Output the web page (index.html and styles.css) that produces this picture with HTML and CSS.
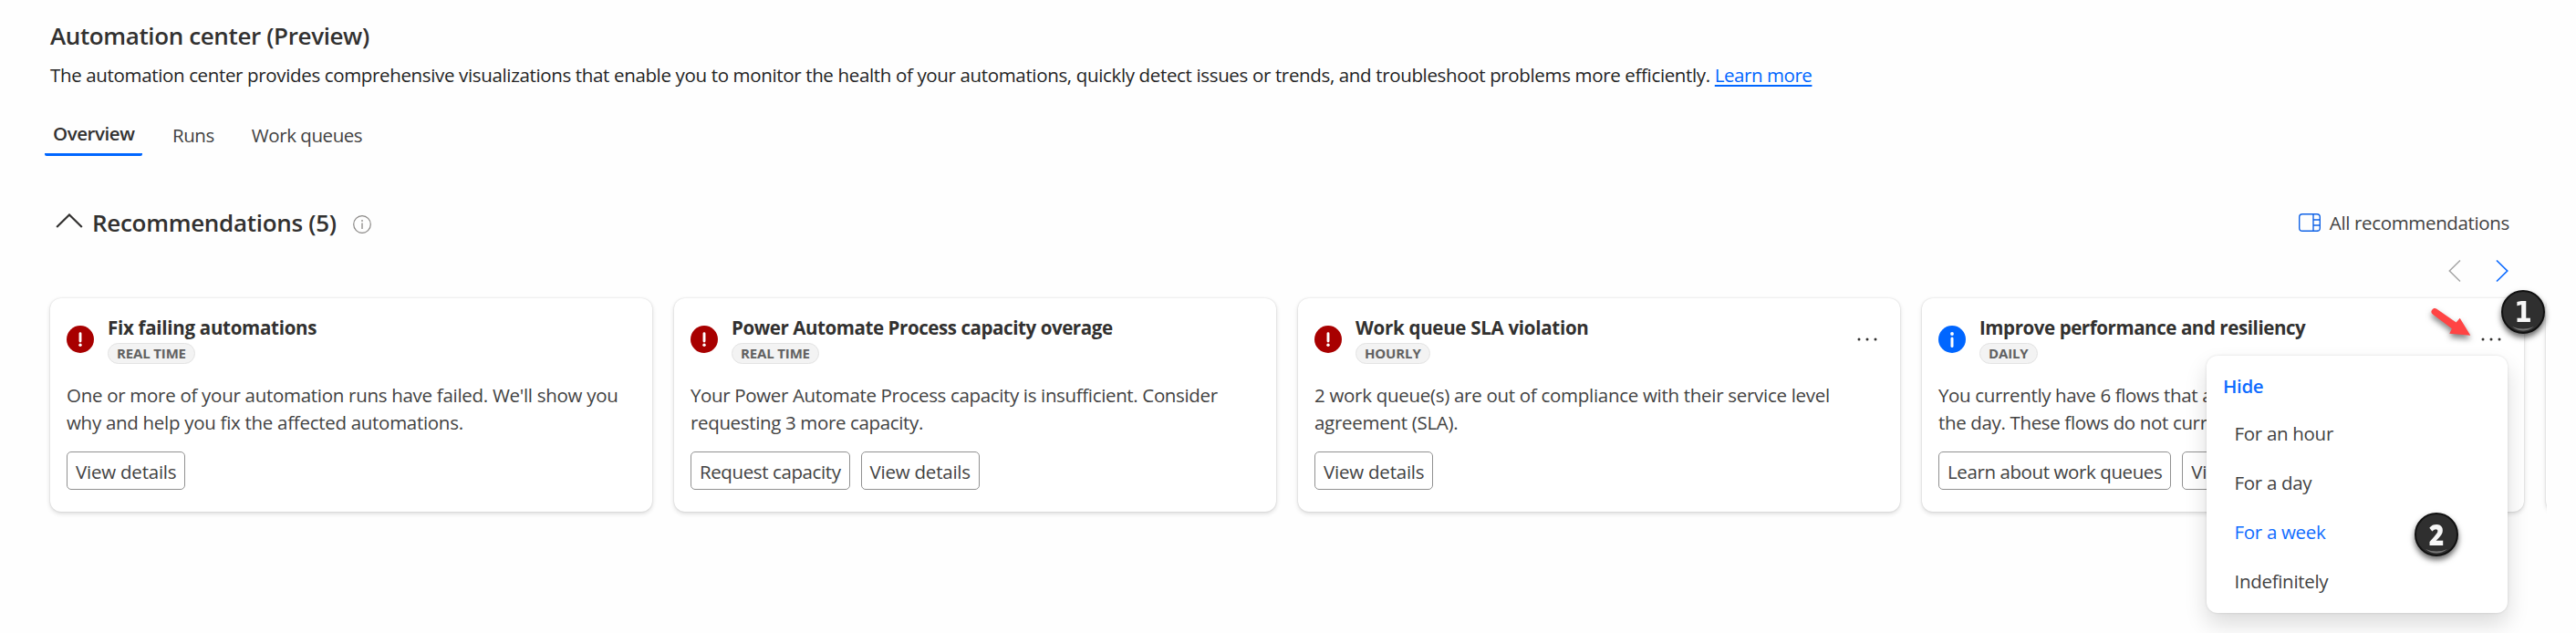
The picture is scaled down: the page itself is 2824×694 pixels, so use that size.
FILE: index.html
```
<!DOCTYPE html>
<html lang="en">
<head>
<meta charset="utf-8">
<title>Automation center</title>
<link rel="stylesheet" href="styles.css">
</head>
<body>
<main class="page">
  <h1 class="page-title">Automation center (Preview)</h1>
  <p class="intro">The automation center provides comprehensive visualizations that enable you to monitor the health of your automations, quickly detect issues or trends, and troubleshoot problems more efficiently. <a class="learn" href="#">Learn more</a></p>

  <nav class="tabs">
    <span class="tab tab-active">Overview</span>
    <span class="tab">Runs</span>
    <span class="tab">Work queues</span>
  </nav>

  <header class="section-head">
    <svg class="collapse" width="30" height="16" viewBox="0 0 30 16"><path d="M1.2 15 15 1.5 28.8 15" fill="none" stroke="#323130" stroke-width="2.2"/></svg>
    <h2 class="section-title">Recommendations (5)</h2>
    <svg class="info" width="20" height="20" viewBox="0 0 20 20"><circle cx="10" cy="10" r="9.3" fill="none" stroke="#8a8886" stroke-width="1.2"/><path d="M10 8.5V15M10 5v2" stroke="#8a8886" stroke-width="1.3"/></svg>
    <span class="all-link">
      <svg width="24" height="20" viewBox="0 0 24 20" fill="none" stroke="#0f62e6" stroke-width="1.4"><rect x=".7" y=".7" width="22.6" height="18.6" rx="3.4"/><path d="M16 1v18M16 7h7M16 13h7"/></svg>
      <span>All recommendations</span>
    </span>
  </header>

  <div class="pager">
    <svg width="14" height="26" viewBox="0 0 14 26"><path d="M13 1.5 1.3 13 13 24.5" fill="none" stroke="#a6a6a6" stroke-width="1.5"/></svg>
    <svg width="14" height="26" viewBox="0 0 14 26"><path d="M1 1.5 12.7 13 1 24.5" fill="none" stroke="#0f6cff" stroke-width="1.7"/></svg>
  </div>

  <section class="carousel">
    <article class="card">
      <div class="card-head">
        <svg class="status" viewBox="0 0 30 30"><circle cx="15" cy="15" r="15" fill="#a80000"/><path d="M15 8.7v8.3" stroke="#fff" stroke-width="2.9" stroke-linecap="round"/><circle cx="15" cy="21.3" r="1.7" fill="#fff"/></svg>
        <div class="card-titles"><h3 class="card-title title-loose">Fix failing automations</h3><span class="pill">REAL TIME</span></div>
      </div>
      <p class="card-text text-loose">One or more of your automation runs have failed. We'll show you<br>why and help you fix the affected automations.</p>
      <div class="actions"><button class="btn btn-details">View details</button></div>
    </article>

    <article class="card">
      <div class="card-head">
        <svg class="status" viewBox="0 0 30 30"><circle cx="15" cy="15" r="15" fill="#a80000"/><path d="M15 8.7v8.3" stroke="#fff" stroke-width="2.9" stroke-linecap="round"/><circle cx="15" cy="21.3" r="1.7" fill="#fff"/></svg>
        <div class="card-titles"><h3 class="card-title">Power Automate Process capacity overage</h3><span class="pill">REAL TIME</span></div>
      </div>
      <p class="card-text">Your Power Automate Process capacity is insufficient. Consider<br>requesting 3 more capacity.</p>
      <div class="actions"><button class="btn">Request capacity</button><button class="btn btn-details">View details</button></div>
    </article>

    <article class="card">
      <div class="card-head">
        <svg class="status" viewBox="0 0 30 30"><circle cx="15" cy="15" r="15" fill="#a80000"/><path d="M15 8.7v8.3" stroke="#fff" stroke-width="2.9" stroke-linecap="round"/><circle cx="15" cy="21.3" r="1.7" fill="#fff"/></svg>
        <div class="card-titles"><h3 class="card-title title-loose">Work queue SLA violation</h3><span class="pill">HOURLY</span></div>
        <svg class="more" viewBox="0 0 22 4" fill="#323130"><circle cx="2" cy="2" r="1.5"/><circle cx="11" cy="2" r="1.5"/><circle cx="20" cy="2" r="1.5"/></svg>
      </div>
      <p class="card-text text-loose">2 work queue(s) are out of compliance with their service level<br>agreement (SLA).</p>
      <div class="actions"><button class="btn btn-details">View details</button></div>
    </article>

    <article class="card">
      <div class="card-head">
        <svg class="status" viewBox="0 0 30 30"><circle cx="15" cy="15" r="15" fill="#0066ff"/><circle cx="15" cy="9" r="1.9" fill="#fff"/><path d="M15 14v8.5" stroke="#fff" stroke-width="3" stroke-linecap="round"/></svg>
        <div class="card-titles"><h3 class="card-title">Improve performance and resiliency</h3><span class="pill">DAILY</span></div>
        <svg class="more" viewBox="0 0 22 4" fill="#323130"><circle cx="2" cy="2" r="1.5"/><circle cx="11" cy="2" r="1.5"/><circle cx="20" cy="2" r="1.5"/></svg>
      </div>
      <p class="card-text">You currently have 6 flows that a<br>the day. These flows do not curr</p>
      <div class="actions"><button class="btn">Learn about work queues</button><button class="btn btn-details">Vi</button></div>
    </article>

    <article class="card"></article>
  </section>
</main>

<div class="menu">
  <div class="menu-head">Hide</div>
  <div class="menu-item">For an hour</div>
  <div class="menu-item">For a day</div>
  <div class="menu-item menu-item-active">For a week</div>
  <div class="menu-item">Indefinitely</div>
</div>

<svg class="arrow" width="60" height="50" viewBox="0 0 60 50"><path d="M8 6.6A3.6 3.6 0 0 0 4.4 13L24.9 28.2 22.3 33.7 45.3 35.7 33.7 16.7 29.6 21.6Z" fill="#ff4444"/></svg>

<div class="step step-one"><span class="digit">1</span><svg class="gloss" viewBox="0 0 26 7"><path d="M1 1Q13 10 25 1 13 6 1 1Z" fill="#777"/></svg></div>
<div class="step step-two"><span class="digit">2</span><svg class="gloss" viewBox="0 0 26 7"><path d="M1 1Q13 10 25 1 13 6 1 1Z" fill="#777"/></svg></div>
</body>
</html>
```
FILE: styles.css
```
* { box-sizing: border-box; }

body {
  margin: 0;
  position: relative;
  height: 694px;
  overflow: hidden;
  background: #fefefe;
  color: #323130;
  font: 400 20.5px/30px "Open Sans", "Noto Sans", sans-serif;
  letter-spacing: -0.35px;
  white-space: nowrap;
}

h1, h2, h3, p { margin: 0; }
svg { display: block; flex: none; }

.page { padding: 21px 32px 0 55px; }

.page-title {
  font-size: 26px;
  font-weight: 600;
  line-height: 36px;
  letter-spacing: -0.38px;
}

.intro { margin-top: 10px; color: #242424; }
.learn {
  color: #0066ff;
  letter-spacing: -0.45px;
  text-decoration-thickness: 1.5px;
  text-underline-offset: 2.5px;
}

.tabs {
  display: flex;
  gap: 15px;
  height: 40px;
  margin: 34px 0 0 -6px;
}
.tab { padding: 2px 10px 0; color: #424242; letter-spacing: -0.44px; }
.tab + .tab + .tab { margin-left: 6px; }
.tab-active {
  width: 107px;
  margin-right: 8px;
  padding: 0 0 0 9px;
  border-bottom: 3px solid #0066ff;
  border-radius: 0 0 2px 2px;
  color: #323130;
  font-weight: 600;
}

.section-head { display: flex; height: 36px; margin-top: 55px; }
.collapse { margin: 8px 0 0 6px; }
.section-title {
  margin-left: 10px;
  font-size: 26px;
  font-weight: 600;
  line-height: 36px;
  letter-spacing: -0.3px;
}
.info { margin: 10px 0 0 18px; }
.all-link {
  display: flex;
  gap: 10px;
  margin-left: auto;
  padding-right: 41px;
  color: #424242;
  line-height: 36px;
}
.all-link svg { margin-top: 8px; }

.pager {
  display: flex;
  justify-content: flex-end;
  gap: 38px;
  margin-top: 22px;
  padding-right: 42px;
}

/* Padding leaves room for the card shadows inside the clipped strip */
.carousel {
  display: flex;
  gap: 24px;
  margin: 7px 0 0 -10px;
  padding: 10px 0 20px 10px;
  overflow: hidden;
}

.card {
  flex: none;
  width: 660px;
  height: 234px;
  padding: 17px 18px 0;
  border-radius: 12px;
  background: #fff;
  box-shadow: 0 0 2px rgba(0, 0, 0, .14), 0 2px 5px rgba(0, 0, 0, .15);
}
.card-head { display: flex; height: 55px; }
.status { width: 30px; height: 30px; margin-top: 13px; }
.card-titles { margin-left: 15px; }
.card-title {
  font-size: 20.5px;
  font-weight: 700;
  line-height: 30px;
  letter-spacing: -0.42px;
}
.title-loose { letter-spacing: -0.28px; }
.pill {
  display: block;
  width: max-content;
  height: 23px;
  margin-top: 2px;
  padding: 0 9px;
  border: 1px solid #e3e3e3;
  border-radius: 12px;
  background: #f3f3f3;
  color: #616161;
  font-size: 15px;
  font-weight: 700;
  line-height: 21px;
  letter-spacing: -0.15px;
}
.more { width: 22px; height: 4px; margin: 26px 7px 0 auto; }

.card-text { margin-top: 19px; color: #424242; }
.text-loose { letter-spacing: -0.29px; }

.actions { display: flex; gap: 12px; margin-top: 17px; }
.btn {
  height: 42px;
  padding: 0 9px 0 9px;
  border: 1px solid #919191;
  border-radius: 5px;
  background: #fff;
  color: #424242;
  font: inherit;
  line-height: 42px;
  letter-spacing: -0.4px;
  text-align: left;
}
.btn-details { width: 130px; letter-spacing: -0.22px; }

.menu {
  position: absolute;
  left: 2419px;
  top: 390px;
  width: 330px;
  height: 282px;
  padding: 18px 18px 0;
  border-radius: 12px;
  background: #fff;
  color: #424242;
  box-shadow: 0 0 3px rgba(0, 0, 0, .12), 0 12px 24px rgba(0, 0, 0, .14);
}
.menu-head { color: #0f6cff; font-weight: 600; }
.menu-item { padding-left: 12.5px; margin-top: 24px; letter-spacing: -0.3px; }
.menu-head + .menu-item { margin-top: 22px; }
.menu-item-active { color: #0f6cff; }

.arrow {
  position: absolute;
  left: 2663px;
  top: 332px;
  filter: drop-shadow(0 4px 3px rgba(0, 0, 0, .5));
}

.step {
  position: absolute;
  width: 48px;
  height: 48px;
  border: 2px solid #111;
  border-radius: 50%;
  background: #2f2f2f;
  box-shadow: 0 4px 6px rgba(0, 0, 0, .6);
  color: #f7f7f7;
  font: 700 32px/44px "DejaVu Sans", sans-serif;
  letter-spacing: 0;
  text-align: center;
}
.step-one { left: 2742px; top: 318px; }
.step-two { left: 2647px; top: 562px; font-family: "Open Sans", sans-serif; font-weight: 800; }
.digit { display: block; transform: scaleX(.88); }
.gloss { position: absolute; left: 9px; bottom: 0; width: 26px; height: 7px; }
```
